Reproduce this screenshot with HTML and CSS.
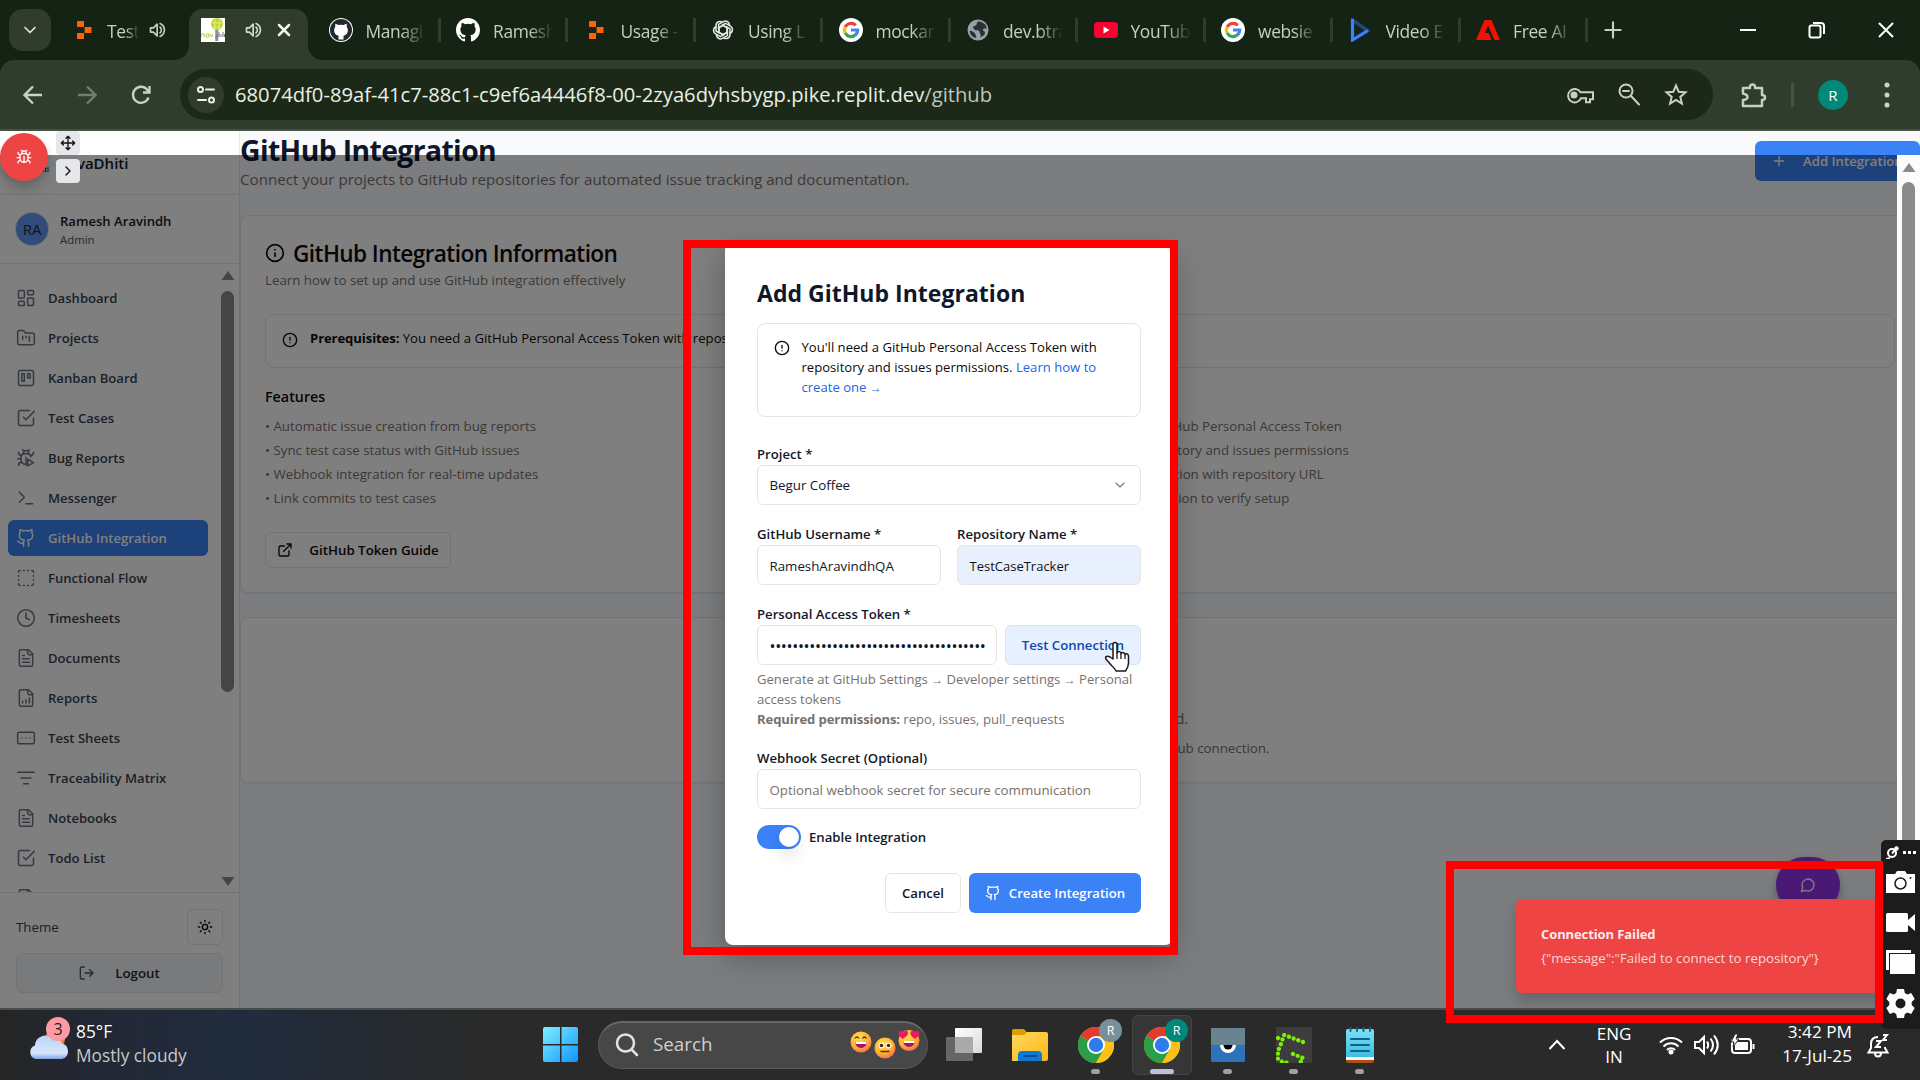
FILE: index.html
```html
<!DOCTYPE html>
<html lang="en">
<head>
<meta charset="utf-8">
<title>GitHub Integration</title>
<link rel="stylesheet" href="styles.css">
</head>
<body>
<svg class="sprite" aria-hidden="true">
  <defs>
    <linearGradient id="gWin" x1="0" y1="0" x2="1" y2="1"><stop offset="0" stop-color="#80f0ff"/><stop offset="1" stop-color="#0f95ff"/></linearGradient>
    <linearGradient id="gCloud" x1="0" y1="0" x2="0" y2="1"><stop offset="0" stop-color="#bcd4f8"/><stop offset=".75" stop-color="#d6e5fb"/><stop offset="1" stop-color="#7fa6e8"/></linearGradient>
    <linearGradient id="gFolder" x1="0" y1="0" x2="1" y2="1"><stop offset="0" stop-color="#ffd75e"/><stop offset="1" stop-color="#fbb917"/></linearGradient>
    <radialGradient id="gFace" cx=".4" cy=".3" r=".8"><stop offset="0" stop-color="#ffdf4f"/><stop offset=".6" stop-color="#ffae2b"/><stop offset="1" stop-color="#f0566b"/></radialGradient>
    <linearGradient id="gTaskA" x1="0" y1="0" x2="1" y2="1"><stop offset="0" stop-color="#fff"/><stop offset="1" stop-color="#d9d9d9"/></linearGradient>
    <linearGradient id="gNote" x1="0" y1="0" x2="0" y2="1"><stop offset="0" stop-color="#7fe0f7"/><stop offset="1" stop-color="#3fbbdf"/></linearGradient>
  </defs>
  <symbol id="i-dash" viewBox="0 0 24 24"><rect x="3" y="3" width="7" height="9" rx="1"/><rect x="14" y="3" width="7" height="5" rx="1"/><rect x="14" y="12" width="7" height="9" rx="1"/><rect x="3" y="16" width="7" height="5" rx="1"/></symbol>
  <symbol id="i-project" viewBox="0 0 24 24"><path d="M4 20h16a2 2 0 0 0 2-2V8a2 2 0 0 0-2-2h-7.9a2 2 0 0 1-1.7-.9l-.8-1.2A2 2 0 0 0 7.9 3H4a2 2 0 0 0-2 2v13c0 1.1.9 2 2 2Z"/><path d="M8 10v4M12 10v2M16 10v6"/></symbol>
  <symbol id="i-kanban" viewBox="0 0 24 24"><rect x="3" y="3" width="18" height="18" rx="2"/><rect x="7" y="7" width="3" height="9"/><rect x="14" y="7" width="3" height="5"/></symbol>
  <symbol id="i-check" viewBox="0 0 24 24"><path d="m9 11 3 3L22 4"/><path d="M21 12v7a2 2 0 0 1-2 2H5a2 2 0 0 1-2-2V5a2 2 0 0 1 2-2h11"/></symbol>
  <symbol id="i-bugplay" viewBox="0 0 24 24"><path d="M12.8 19.4a1.3 1.3 0 0 1-1.6.1C8 19 6 17 6 14v-3a4 4 0 0 1 4-4h4a4 4 0 0 1 4 3.6"/><path d="M14 13.5v8l7-4Z"/><path d="m14.1 3.9 1.9-1.9M8 2l1.9 1.9M9 7.1V6a3 3 0 1 1 6 0v1.1M6.5 9C4.6 8.8 3 7.1 3 5M6 13H2M3 21c0-2.1 1.7-3.9 3.8-4M21 5c0 2.100-1.600 3.800-3.500 4M12 20v-9"/></symbol>
  <symbol id="i-term" viewBox="0 0 24 24"><path d="m4 17 6-6-6-6M12 19h8"/></symbol>
  <symbol id="i-github" viewBox="0 0 24 24"><path d="M15 22v-4a4.800 4.800 0 0 0-1-3.500c3 0 6-2 6-5.500.080-1.250-.270-2.480-1-3.500.280-1.150.280-2.350 0-3.500 0 0-1 0-3 1.500-2.640-.5-5.360-.5-8 0C6 2 5 2 5 2c-.3 1.150-.3 2.350 0 3.500A5.400 5.400 0 0 0 4 9c0 3.500 3 5.500 6 5.500-.39.49-.68 1.050-.85 1.650-.17.6-.22 1.230-.15 1.850v4"/><path d="M9 18c-4.510 2-5-2-7-2"/></symbol>
  <symbol id="i-dashed" viewBox="0 0 24 24"><path d="M5 3a2 2 0 0 0-2 2M19 3a2 2 0 0 1 2 2M21 19a2 2 0 0 1-2 2M5 21a2 2 0 0 1-2-2M9 3h1M9 21h1M14 3h1M14 21h1M3 9v1M21 9v1M3 14v1M21 14v1"/></symbol>
  <symbol id="i-clock" viewBox="0 0 24 24"><circle cx="12" cy="12" r="10"/><path d="M12 6v6l4 2"/></symbol>
  <symbol id="i-doc" viewBox="0 0 24 24"><path d="M15 2H6a2 2 0 0 0-2 2v16a2 2 0 0 0 2 2h12a2 2 0 0 0 2-2V7Z"/><path d="M14 2v4a2 2 0 0 0 2 2h4M10 9H8M16 13H8M16 17H8"/></symbol>
  <symbol id="i-report" viewBox="0 0 24 24"><path d="M15 2H6a2 2 0 0 0-2 2v16a2 2 0 0 0 2 2h12a2 2 0 0 0 2-2V7Z"/><path d="M14 2v4a2 2 0 0 0 2 2h4M8 18v-2M12 18v-4M16 18v-6"/></symbol>
  <symbol id="i-sheet" viewBox="0 0 24 24"><rect x="2" y="5" width="20" height="14" rx="2"/><path d="M7 12h.010M12 12h.010M17 12h.010"/></symbol>
  <symbol id="i-filter" viewBox="0 0 24 24"><path d="M2 5h20M6 12h12M9 19h6"/></symbol>
  <symbol id="i-sun" viewBox="0 0 24 24"><circle cx="12" cy="12" r="4"/><path d="M12 2v2M12 20v2M4.900 4.900l1.400 1.400M17.700 17.700l1.400 1.400M2 12h2M20 12h2M6.300 17.700l-1.400 1.400M19.100 4.900l-1.400 1.400"/></symbol>
  <symbol id="i-logout" viewBox="0 0 24 24"><path d="M8 21H4a2 2 0 0 1-2-2V5a2 2 0 0 1 2-2h4M16 17l5-5-5-5M21 12H9"/></symbol>
  <symbol id="i-info" viewBox="0 0 24 24"><circle cx="12" cy="12" r="10"/><path d="M12 16v-4M12 8h.010"/></symbol>
  <symbol id="i-alert" viewBox="0 0 24 24"><circle cx="12" cy="12" r="10"/><path d="M12 8v4M12 16h.010"/></symbol>
  <symbol id="i-ext" viewBox="0 0 24 24"><path d="M15 3h6v6M10 14 21 3M18 13v6a2 2 0 0 1-2 2H5a2 2 0 0 1-2-2V8a2 2 0 0 1 2-2h6"/></symbol>
  <symbol id="i-plus" viewBox="0 0 24 24"><path d="M5 12h14M12 5v14"/></symbol>
  <symbol id="i-down" viewBox="0 0 24 24"><path d="m6 9 6 6 6-6"/></symbol>
  <symbol id="i-right" viewBox="0 0 24 24"><path d="m9 18 6-6-6-6"/></symbol>
  <symbol id="i-move" viewBox="0 0 24 24"><path d="M12 2v20M15 19l-3 3-3-3M19 9l3 3-3 3M2 12h20M5 9l-3 3 3 3M9 5l3-3 3 3"/></symbol>
  <symbol id="i-bug" viewBox="0 0 24 24"><path d="m8 2 1.900 1.900M14.100 3.900 16 2M9 7.100V6a3 3 0 1 1 6 0v1.100M12 20c-3.300 0-6-2.700-6-6v-3a4 4 0 0 1 4-4h4a4 4 0 0 1 4 4v3c0 3.300-2.700 6-6 6M12 20v-9M6.500 9C4.600 8.800 3 7.100 3 5M6 13H2M3 21c0-2.100 1.700-3.900 3.800-4M21 5c0 2.100-1.600 3.800-3.500 4M22 13h-4M17.200 17c2.100.1 3.800 1.900 3.800 4"/></symbol>
  <symbol id="i-chat" viewBox="0 0 24 24"><path d="M7.900 20A9 9 0 1 0 4 16.100L2 22Z"/></symbol>
  <symbol id="i-speaker" viewBox="0 0 24 24"><path d="M3 9.500v5h3.500L11 19V5L6.500 9.500ZM14.500 8.500a5 5 0 0 1 0 7M14.500 4.200a8.500 8.500 0 0 1 0 15.600"/></symbol>
  <symbol id="f-replit" viewBox="0 0 16 20"><path fill="#fc6503" stroke="none" d="M1 1.500Q1 1 1.500 1H7.500Q8 1 8 1.500V7H1.500Q1 7 1 6.500ZM8.600 7h6.400q.5 0 .5.500v5q0 .500-.5.500H8.600ZM1 13.500Q1 13 1.500 13H8v5.500q0 .500-.5.500h-6q-.5 0-.5-.500Z"/></symbol>
  <symbol id="f-github" viewBox="0 0 16 16"><path stroke="none" d="M8 0C3.580 0 0 3.580 0 8c0 3.540 2.290 6.530 5.470 7.590.4.070.550-.170.550-.380 0-.190-.010-.820-.010-1.490-2.010.370-2.530-.490-2.690-.940-.090-.230-.480-.940-.820-1.130-.280-.150-.680-.520-.010-.530.630-.010 1.080.580 1.230.820.720 1.210 1.870.870 2.330.660.070-.520.280-.870.510-1.070-1.780-.2-3.640-.890-3.640-3.950 0-.870.310-1.590.820-2.150-.080-.2-.360-1.020.080-2.120 0 0 .670-.210 2.200.820a7.600 7.600 0 0 1 4 0c1.530-1.040 2.200-.820 2.200-.820.440 1.100.160 1.920.080 2.120.510.560.820 1.270.820 2.150 0 3.070-1.870 3.750-3.650 3.950.290.250.540.730.540 1.480 0 1.070-.010 1.930-.010 2.200 0 .210.150.460.550.380A8 8 0 0 0 16 8c0-4.420-3.580-8-8-8Z"/></symbol>
  <symbol id="f-google" viewBox="0 0 24 24"><circle cx="12" cy="12" r="12" fill="#fff"/><g fill="none" stroke-width="3.200"><path stroke="#ea4335" d="M6.200 9a6.600 6.600 0 0 1 10.500-1.700"/><path stroke="#fbbc05" d="M6.200 15.100a6.600 6.600 0 0 1 0-6.200"/><path stroke="#34a853" d="M16.200 17.100a6.600 6.600 0 0 1-10-2"/><path stroke="#4285f4" d="M12 12h6.600a6.600 6.600 0 0 1-2.500 5.200"/></g></symbol>
  <symbol id="t-chrome" viewBox="0 0 36 36"><circle cx="18" cy="18" r="18" fill="#fbc116"/><path fill="#e33b2e" d="M18 18 2.400 9A18 18 0 0 1 33.600 9Z"/><path fill="#2a9e48" d="M18 18 2.400 9A18 18 0 0 0 18 36l8-13Z"/><path fill="#fbc116" d="M18 9h15.600A18 18 0 0 1 18 36l8-14Z"/><circle cx="18" cy="18" r="9" fill="#fff"/><circle cx="18" cy="18" r="7.200" fill="#2f7bee"/></symbol>
</svg>

<header class="browser">
  <div class="tabs">
    <button class="tab-search"><svg class="ic" width="20" height="20" stroke-width="3"><use href="#i-down"/></svg></button>
    <div class="tab tab-first"><svg width="16" height="20"><use href="#f-replit"/></svg><span class="tab-name short">Test</span><svg class="ic" width="20" height="22"><use href="#i-speaker"/></svg></div>
    <div class="tab-active">
      <svg width="24" height="24" viewBox="0 0 24 24"><rect width="24" height="24" fill="#fff"/><path d="M15 10v13M16.500 10v13" stroke="#8b8f99" stroke-width="1.500"/><circle cx="16" cy="6" r="6" fill="#c3d82e"/><path d="M11 5h10M12 9h8M14 2v9M18 2v9" stroke="#e7f19a" stroke-width=".8"/><path d="M0 19v-3h3v3M5 16h3v3H5zM9 16l1.500 3 1.500-3" fill="none" stroke="#b9d02a"/><path d="M14 19h3v-3M18 14v5M20 16v3M22 14v5M23.500 16v3" fill="none" stroke="#777b88"/></svg>
      <svg class="ic" width="20" height="22"><use href="#i-speaker"/></svg>
      <svg class="ic x" width="14" height="14" viewBox="0 0 14 14"><path d="m2 2 10 10M12 2 2 12"/></svg>
    </div>
    <div class="tab"><svg width="24" height="24" viewBox="0 0 24 24"><circle cx="12" cy="12" r="12" fill="#fff"/><circle cx="12" cy="12" r="11" fill="#24292f"/><svg x="2" y="2" width="20" height="20" viewBox="0 0 16 16" fill="#fff"><path d="M6 15.500v-3C3.500 12 2.500 10.500 2.500 8q0-1.500.900-2.500-.3-1.200.2-2.500 1 .1 2.300 1a8 8 0 0 1 4.200 0Q11.400 3.100 12.400 3q.5 1.300.2 2.500.900 1 .9 2.500c0 2.500-1 4-3.500 4.500v3Z"/></svg></svg><span class="tab-name">Managi</span></div>
    <div class="tab"><svg width="24" height="24" fill="#fff"><use href="#f-github"/></svg><span class="tab-name">Ramesh</span></div>
    <div class="tab"><svg class="narrow" width="16" height="20"><use href="#f-replit"/></svg><span class="tab-name">Usage -</span></div>
    <div class="tab"><svg width="24" height="24" viewBox="0 0 24 24" fill="none" stroke="#e4e8e2" stroke-width="1.500"><g id="petal"><path d="M12 7.200 8 9.500v5.400L5 13V7.500A4 4 0 0 1 11.800 4.600"/></g><use href="#petal" transform="rotate(60 12 12)"/><use href="#petal" transform="rotate(120 12 12)"/><use href="#petal" transform="rotate(180 12 12)"/><use href="#petal" transform="rotate(240 12 12)"/><use href="#petal" transform="rotate(300 12 12)"/></svg><span class="tab-name">Using L</span></div>
    <div class="tab"><svg width="24" height="24"><use href="#f-google"/></svg><span class="tab-name">mockar</span></div>
    <div class="tab"><svg width="24" height="24" viewBox="0 0 24 24"><circle cx="12" cy="12" r="10.500" fill="#9aa0a6"/><path fill="#2a3138" d="M12 3.500c-2 1.500-.5 3-2.500 4S6 8.500 8 11s5 .5 5.500 3 2 2.500 1 4.500 4.500-1 4.500-3.500-2.500-1.500-2-3.500 4 .5 3.500-2.500S15 3 12 3.500ZM4 12.500c2 .5 5 2 5.500 4s1.500 2 .5 3.500C6 19 3.500 16 4 12.500Z"/></svg><span class="tab-name">dev.btra</span></div>
    <div class="tab"><svg width="24" height="24" viewBox="0 0 24 24"><rect y="4" width="24" height="16" rx="4" fill="#ff0033"/><path d="m9.500 8.500 6 3.500-6 3.500Z" fill="#fff"/></svg><span class="tab-name">YouTub</span></div>
    <div class="tab"><svg width="24" height="24"><use href="#f-google"/></svg><span class="tab-name">websie</span></div>
    <div class="tab"><svg width="24" height="24" viewBox="0 0 24 24" fill="none"><path d="m3.500 2 15 10.500-15 9.500Z" stroke="#22457e" stroke-width="3.500"/><path d="M3.500 1v21l15.500-9.500" stroke="#3a82ff" stroke-width="3"/></svg><span class="tab-name">Video E</span></div>
    <div class="tab"><svg width="24" height="24" viewBox="0 0 24 24"><path fill="#f21105" d="M8.500 2h7L24 22h-5.500L12 7.500 9 15h4l2.500 7H0Z"/></svg><span class="tab-name">Free AI</span></div>
    <svg class="ic new-tab" width="26" height="26" stroke-width="3"><use href="#i-plus"/></svg>
    <div class="win-controls">
      <svg width="16" height="16" viewBox="0 0 16 16"><path d="M0 8h16"/></svg>
      <svg width="18" height="18" viewBox="0 0 18 18"><rect x="1.500" y="4.500" width="11" height="12" rx="2"/><path d="M5 2h8q3 0 3 3v8"/></svg>
      <svg width="16" height="18" viewBox="0 0 16 18"><path d="m1 2 14 14M15 2 1 16"/></svg>
    </div>
  </div>
  <div class="toolbar">
    <svg class="ic nav-ic" width="20" height="20" viewBox="0 0 20 20"><path d="M19 10H2M10 1.500 1.500 10l8.500 8.500"/></svg>
    <svg class="ic nav-ic dim" width="20" height="20" viewBox="0 0 20 20"><path d="M1 10h17M10 1.500l8.500 8.500-8.500 8.500"/></svg>
    <svg class="ic nav-ic" width="20" height="20" viewBox="0 0 20 20"><path d="M17.500 12.500a8 8 0 1 1-1.500-8L18 7M18.500 1v6.500H12"/></svg>
    <div class="omnibox">
      <span class="site-info"><svg class="ic" width="20" height="20" viewBox="0 0 20 20"><circle cx="4.500" cy="4.500" r="2.500"/><path d="M10 4.500h8M2 15h8"/><circle cx="15.500" cy="15" r="2.500"/></svg></span>
      <span class="url">68074df0-89af-41c7-88c1-c9ef6a4446f8-00-2zya6dyhsbygp.pike.replit.dev<span class="path">/github</span></span>
      <svg class="ic lt" width="28" height="20" viewBox="0 0 28 20"><path d="M14.500 7.200H27v7h-3v3h-4v-4h-5A6.700 6.700 0 1 1 14.500 7.200Z"/><circle cx="8" cy="10" r="2.500" fill="currentColor"/></svg>
      <svg class="ic lt" width="24" height="26" viewBox="0 0 24 26"><circle cx="9" cy="9" r="6.500"/><path d="M6 9h6M14 14l8 8.500"/></svg>
      <svg class="ic lt" width="24" height="24" viewBox="0 0 24 24"><path d="m12 2.500 2.700 6.300 6.800.600-5.200 4.500 1.600 6.700-5.900-3.600-5.900 3.600 1.600-6.700-5.200-4.500 6.800-.600Z"/></svg>
    </div>
    <svg class="ic puzzle" width="26" height="26" viewBox="0 0 26 26"><path d="M2 6h7q-.5-3.500 2.500-3.500T14 6h7v7q3 0 3 2.500T21 18v6H2v-6q4.500-.5 4.500-3T2 11.500Z"/></svg>
    <i class="tb-sep"></i>
    <span class="profile">R</span>
    <svg class="dots" width="6" height="26" viewBox="0 0 6 26"><circle cx="3" cy="3" r="2.500"/><circle cx="3" cy="13" r="2.500"/><circle cx="3" cy="23" r="2.500"/></svg>
  </div>
</header>

<div class="page">
  <aside class="sidebar">
    <div class="brand"><span class="brand-logo">novadhiti</span><span>NovaDhiti</span></div>
    <div class="user"><span class="avatar">RA</span><div class="who"><b>Ramesh Aravindh</b><small>Admin</small></div></div>
    <div class="nav-wrap">
      <nav>
        <a><svg class="ic" width="20" height="20"><use href="#i-dash"/></svg>Dashboard</a>
        <a><svg class="ic" width="20" height="20"><use href="#i-project"/></svg>Projects</a>
        <a><svg class="ic" width="20" height="20"><use href="#i-kanban"/></svg>Kanban Board</a>
        <a><svg class="ic" width="20" height="20"><use href="#i-check"/></svg>Test Cases</a>
        <a><svg class="ic" width="20" height="20"><use href="#i-bugplay"/></svg>Bug Reports</a>
        <a><svg class="ic" width="20" height="20"><use href="#i-term"/></svg>Messenger</a>
        <a class="current"><svg class="ic" width="20" height="20"><use href="#i-github"/></svg>GitHub Integration</a>
        <a><svg class="ic" width="20" height="20"><use href="#i-dashed"/></svg>Functional Flow</a>
        <a><svg class="ic" width="20" height="20"><use href="#i-clock"/></svg>Timesheets</a>
        <a><svg class="ic" width="20" height="20"><use href="#i-doc"/></svg>Documents</a>
        <a><svg class="ic" width="20" height="20"><use href="#i-report"/></svg>Reports</a>
        <a><svg class="ic" width="20" height="20"><use href="#i-sheet"/></svg>Test Sheets</a>
        <a><svg class="ic" width="20" height="20"><use href="#i-filter"/></svg>Traceability Matrix</a>
        <a><svg class="ic" width="20" height="20"><use href="#i-doc"/></svg>Notebooks</a>
        <a><svg class="ic" width="20" height="20"><use href="#i-check"/></svg>Todo List</a>
        <a><svg class="ic" width="20" height="20"><use href="#i-doc"/></svg></a>
      </nav>
      <div class="nav-scroll">
        <svg width="16" height="11" viewBox="0 0 16 11"><path d="M8 1 14.500 10h-13Z"/></svg>
        <i></i>
        <svg width="16" height="11" viewBox="0 0 16 11"><path d="M8 10 14.500 1h-13Z"/></svg>
      </div>
    </div>
    <div class="side-foot">
      <div class="theme"><span>Theme</span><button><svg class="ic" width="16" height="16"><use href="#i-sun"/></svg></button></div>
      <button class="logout"><svg class="ic" width="16" height="16"><use href="#i-logout"/></svg>Logout</button>
    </div>
  </aside>

  <main>
    <div class="head">
      <div><h1>GitHub Integration</h1><p>Connect your projects to GitHub repositories for automated issue tracking and documentation.</p></div>
      <button class="add"><svg class="ic" width="16" height="16"><use href="#i-plus"/></svg>Add Integration</button>
    </div>
    <section class="card info">
      <h2><svg class="ic" width="20" height="20"><use href="#i-info"/></svg>GitHub Integration Information</h2>
      <p class="desc">Learn how to set up and use GitHub integration effectively</p>
      <div class="prereq"><svg class="ic" width="16" height="16"><use href="#i-alert"/></svg><span><b>Prerequisites:</b> You need a GitHub Personal Access Token with repository access</span></div>
      <div class="cols">
        <div><h3>Features</h3><ul><li>• Automatic issue creation from bug reports</li><li>• Sync test case status with GitHub issues</li><li>• Webhook integration for real-time updates</li><li>• Link commits to test cases</li></ul></div>
        <div><h3>Setup</h3><ul class="steps"><li>• Create a GitHub Personal Access Token</li><li>• Grant repository and issues permissions</li><li class="wide">• Add integration with repository URL</li><li>• Test connection to verify setup</li></ul></div>
      </div>
      <button class="guide"><svg class="ic" width="16" height="16"><use href="#i-ext"/></svg>GitHub Token Guide</button>
    </section>
    <section class="card empty">
      <p class="lead">No GitHub integrations configured.</p>
      <p>Create an integration to get started with your GitHub connection.</p>
    </section>
  </main>
  <button class="chat"><svg class="ic" width="16" height="16"><use href="#i-chat"/></svg></button>
  <div class="overlay"></div>
  <div class="page-scroll"><svg width="16" height="11" viewBox="0 0 16 11"><path d="M8 1 14.500 10h-13Z"/></svg><i></i></div>

  <button class="bug-fab"><svg class="ic" width="16" height="16"><use href="#i-bug"/></svg></button>
  <div class="fab-tools"><button><svg class="ic" width="16" height="16"><use href="#i-move"/></svg></button><button><svg class="ic" width="16" height="16"><use href="#i-right"/></svg></button></div>

  <div class="dialog">
    <h2>Add GitHub Integration</h2>
    <div class="note"><svg class="ic" width="16" height="16"><use href="#i-alert"/></svg><p>You'll need a GitHub Personal Access Token with<br>repository and issues permissions. <a>Learn how to<br>create one <span class="arrow">→</span></a></p></div>
    <div class="field"><label>Project *</label><div class="input select">Begur Coffee<svg class="ic" width="16" height="16"><use href="#i-down"/></svg></div></div>
    <div class="pair">
      <div class="field"><label>GitHub Username *</label><div class="input low">RameshAravindhQA</div></div>
      <div class="field"><label>Repository Name *</label><div class="input low filled">TestCaseTracker</div></div>
    </div>
    <div class="field token">
      <label>Personal Access Token *</label>
      <div class="row"><div class="input low secret"><span>••••••••••••••••••••••••••••••••••••••</span></div><button class="test">Test Connection</button></div>
      <p class="help">Generate at GitHub Settings <span class="arrow">→</span> Developer settings <span class="arrow">→</span> Personal<br>access tokens<br><b>Required permissions:</b> repo, issues, pull_requests</p>
    </div>
    <div class="field"><label>Webhook Secret (Optional)</label><div class="input low hint">Optional webhook secret for secure communication</div></div>
    <div class="switch-row"><span class="switch"><i></i></span><label>Enable Integration</label></div>
    <div class="actions"><button class="cancel">Cancel</button><button class="create"><svg class="ic" width="16" height="16"><use href="#i-github"/></svg>Create Integration</button></div>
  </div>

  <div class="toast"><b>Connection Failed</b><span>{"message":"Failed to connect to repository"}</span></div>
</div>

<footer class="taskbar">
  <div class="weather">
    <svg width="46" height="48" viewBox="0 0 46 48"><circle cx="27" cy="24" r="10" fill="#f78420"/><path fill="url(#gCloud)" d="M8 44a7 7 0 0 1-1-13.500 10 10 0 0 1 17-7 8 8 0 0 1 10 5 8 8 0 0 1 0 15.500Z"/><circle cx="30" cy="14" r="12" fill="#ff99a4"/></svg>
    <span class="badge">3</span>
    <div><span>85°F</span><span class="cond">Mostly cloudy</span></div>
  </div>
  <div class="apps">
    <svg class="start" width="36" height="36" viewBox="0 0 36 36" fill="url(#gWin)"><path d="M2 0h15v17H0V2Q0 0 2 0ZM18.500 0H33q2 0 2 2v15H18.500ZM0 18.500h17V35H2q-2 0-2-2ZM18.500 18.500H35V33q0 2-2 2H18.500Z"/></svg>
    <div class="search"><svg width="24" height="24" viewBox="0 0 24 24" fill="#666" stroke="#e4e4e4" stroke-width="2.500" stroke-linecap="round"><circle cx="10.500" cy="10" r="8.500"/><path d="m17 17 5 5"/></svg><span>Search</span>
      <svg class="faces" width="70" height="30" viewBox="0 0 70 30"><g fill="url(#gFace)"><circle cx="11" cy="12" r="10.500"/><circle cx="35" cy="18" r="10.500"/><circle cx="59" cy="10.500" r="10.500"/></g><g fill="#a3126b"><path d="M5 12h12a6 6 0 0 1-12 0ZM53 11h12a6 6 0 0 1-12 0Z"/></g><g fill="none" stroke="#5c2d12" stroke-width="1.300"><path d="M5 8.500q2-3 4 0M12.500 8.500q2-3 4 0M30.500 21.500h9"/></g><path d="M5.500 12h11v2h-11ZM53.500 11h11v2h-11Z" fill="#fff"/><g fill="#fff"><circle cx="31.500" cy="15.500" r="3"/><circle cx="38.500" cy="15.500" r="3"/></g><g fill="#4a2a1a"><circle cx="31.500" cy="15.500" r="1.800"/><circle cx="38.500" cy="15.500" r="1.800"/></g><path fill="#f0165f" d="M53 9c-3-2-5-4-4.500-6.500S52 0 53.500 2.500C55 0 58 0 58 2.800S55.500 7 53 9ZM65 9c-2.500-2-5-4-4.500-6.500S64 0 65 2.500C66.500 0 69.500 0 69.500 2.800S67.500 7 65 9Z"/></svg>
    </div>
    <svg class="taskview" width="36" height="36" viewBox="0 0 36 36"><rect y="10" width="27" height="24" rx="1" fill="#666"/><rect x="9" y="1" width="27" height="25" rx="1" fill="url(#gTaskA)"/><path d="M9 10h18v16H9Z" fill="#aaa"/></svg>
    <div class="app"><svg width="36" height="36" viewBox="0 0 36 36"><path fill="#df9c00" d="M0 4Q0 2 2 2h9q2 0 3.500 3L16 7v6H0Z"/><path fill="url(#gFolder)" d="M0 8h12l3-3h19q2 0 2 2v25q0 2-2 2H0Z"/><path fill="#0f7ad0" d="M6 34V28q0-4 4-4h16q4 0 4 4v6Z"/><path d="M11 29h14" stroke="#0a4f96" stroke-width="2"/></svg></div>
    <div class="app run"><svg width="36" height="36"><use href="#t-chrome"/></svg><span class="pip">R</span></div>
    <div class="app run focus"><svg width="36" height="36"><use href="#t-chrome"/></svg><span class="pip teal">R</span></div>
    <div class="app run"><svg width="36" height="36" viewBox="0 0 36 36"><rect x="1" y="1" width="34" height="34" rx="1" fill="#2d73bb"/><path fill="#698490" d="M1 2q0-1 1-1h32q1 0 1 1v16H1Z"/><path fill="#fff" d="M10 18h16a8 8 0 0 1-16 0Z"/><path fill="#000" d="M13.500 18h9a4.500 4.500 0 0 1-9 0Z"/></svg></div>
    <div class="app run"><svg width="36" height="36" viewBox="0 0 36 36"><rect width="36" height="36" fill="#3d3d3d"/><path d="M27 15 8 8 5 17 2 24v8l6 4 6-1M2 11l4 3M17 27l10 4-3 5" fill="none" stroke="#7cf000" stroke-width="4.200" stroke-linecap="round" stroke-dasharray=".1 4.900"/></svg></div>
    <div class="app run"><svg width="36" height="36" viewBox="0 0 36 36"><path fill="#a8500f" d="M4 28h28v6q0 2-2 2H6q-2 0-2-2Z"/><path fill="#f5f5f5" d="M4 26h28v7H4Z"/><path fill="url(#gNote)" d="M4 4q0-2 2-2h24q2 0 2 2v26H4Z"/><path d="M9 12h18M9 18h18M9 24h18M8.500 1v3M15 1v3M21.500 1v3M28 1v3" stroke="#07668c" stroke-width="2" stroke-linecap="round"/></svg></div>
  </div>
  <div class="tray">
    <svg class="up" width="18" height="12" viewBox="0 0 18 12"><path d="m1.500 10 7.500-8 7.500 8"/></svg>
    <div class="lang"><span>ENG</span><span>IN</span></div>
    <svg class="wifi" width="24" height="20" viewBox="0 0 24 20"><path d="M1 7.500a15.500 15.500 0 0 1 22 0M4.500 11.500a10.500 10.500 0 0 1 15 0M8 15a5.500 5.500 0 0 1 8 0"/><circle cx="12" cy="17" r="1.500" fill="#fff"/></svg>
    <svg width="25" height="22" viewBox="0 0 25 22"><path d="M1 8v6h4l5 5V3L5 8ZM13 7.500q2.500 3.500 0 7M16.500 4.500q5 6.500 0 13M20 1.500q7.500 9.500 0 19"/></svg>
    <svg width="26" height="22" viewBox="0 0 26 22"><rect x="2" y="5" width="19" height="14" rx="3"/><rect x="5" y="8" width="13" height="8" fill="#fff" stroke="none"/><path d="M23.500 10v5"/><path d="M5 0 1 8h3l-1 5 6-8H6l2-5Z" fill="#fff" stroke="#2a2a2a" stroke-width="1"/></svg>
    <div class="time"><span>3:42 PM</span><span>17-Jul-25</span></div>
    <svg width="24" height="26" viewBox="0 0 24 26"><path d="M12 5q-7 0-7 7v4l-2.500 4.500h19L19 16v-1M9 21q0 3.500 3 3.500t3-3.500M10 9h5l-5 6h5M17 3h4l-4 5h4"/></svg>
  </div>
</footer>

<div class="capture">
  <div class="cap-top"><svg width="13" height="13" viewBox="0 0 13 13"><circle cx="6" cy="7" r="4" fill="none" stroke="#fff" stroke-width="2"/><path d="M0 13l4-1M6 7.500 10 3" fill="none" stroke="#fff" stroke-width="2"/><circle cx="10.500" cy="2.500" r="2.200" fill="#fff"/></svg><i></i><i></i><i></i></div>
  <svg class="cap-photo" width="29" height="22" viewBox="0 0 29 22"><path fill="#fff" d="M0 3h9l2-3h8l2 3h8v19H0Z"/><circle cx="14.500" cy="12.500" r="5.500" fill="none" stroke="#1c1c1c" stroke-width="1.500"/><circle cx="24.500" cy="7" r="1" fill="#1c1c1c"/></svg>
  <svg class="cap-video" width="29" height="20" viewBox="0 0 29 20"><path fill="#fff" d="M1.500 0H20.500Q22 0 22 1.500V7L29 1v17l-7-6v5.500Q22 19 20.500 19H1.500Q0 19 0 17.500v-16Q0 0 1.500 0Z"/></svg>
  <svg class="cap-window" width="29" height="24" viewBox="0 0 29 24"><path fill="#fff" d="M0 0h25v3H3v17H0ZM4 4h25v20H4Z"/></svg>
  <svg class="cap-gear" width="29" height="29" viewBox="0 0 29 29"><path fill="#fff" fill-rule="evenodd" d="M11 0h7l.8 4 2.500 1.400L25.200 4l3.500 6-3 2.900v3.200l3 2.900-3.500 6-3.900-1.400-2.500 1.400-.8 4h-7l-.8-4-2.500-1.400L3.800 25l-3.500-6 3-2.900v-3.200l-3-2.900 3.500-6 3.900 1.400L10.200 4ZM14.500 9.500a5 5 0 1 0 0 10 5 5 0 0 0 0-10Z"/></svg>
</div>

<div class="mark mark-dialog"></div>
<div class="mark mark-toast"></div>
<svg class="cursor" width="27" height="32" viewBox="0 0 27 32"><path fill="#fff" stroke="#1a1a1a" stroke-width="1.500" stroke-linejoin="round" d="M9 18V3.500q0-2 2-2t2 2V12q.5-1.500 2-1.500t2 2q.5-1 2-1t2 2.200q.5-.9 1.800-.9T24.500 15v7q0 4-3 8H12q-1.500-3-4.500-5.500L2 18q-1-2 .5-2.500T6 16Z"/><path d="M13 12v6M17 13v5M21 14v4" stroke="#1a1a1a" stroke-width="1.300"/></svg>
</body>
</html>
```
FILE: styles.css
```css
* { box-sizing: border-box; }
body { margin: 0; width: 1920px; height: 1080px; overflow: hidden; position: relative; font-family: "Open Sans", "Noto Sans", sans-serif; font-size: 13.3px; color: #0f172a; background: #2a2a2a; }
button { font: inherit; color: inherit; border: 0; padding: 0; margin: 0; background: none; display: flex; align-items: center; justify-content: center; }
h1, h2, h3, p, ul { margin: 0; padding: 0; list-style: none; }
svg { flex: none; display: block; }
.sprite { position: absolute; width: 0; height: 0; }
.ic { fill: none; stroke: currentColor; stroke-width: 2; stroke-linecap: round; stroke-linejoin: round; }

/* browser chrome */
.browser { height: 131px; background: #152314; color: #c1d3bb; }
.tabs { height: 60px; display: flex; align-items: center; }
.tab-search { width: 42px; height: 42px; margin-left: 9px; border-radius: 14px; background: #303d2d; color: #e3eddf; }
.tab { width: 127.500px; height: 24px; display: flex; align-items: center; padding-left: 15.500px; border-right: 3px solid #303d2d; gap: 13px; font-size: 17.400px; flex: none; }
.tab .narrow { margin: 0 4px; }
.tab-name { width: 64px; line-height: 26px; margin-top: 2px; overflow: hidden; white-space: nowrap; letter-spacing: -.35px; -webkit-mask-image: linear-gradient(90deg, #000 55%, transparent 94%); mask-image: linear-gradient(90deg, #000 55%, transparent 94%); }
.tab-name.short { width: 34px; margin-right: -8px; }
.tab-first { width: 138px; padding-left: 25px; border: 0; gap: 15px; }
.tab-active { width: 119px; height: 51px; align-self: flex-end; background: #303d2d; border-radius: 14px 14px 0 0; display: flex; align-items: center; padding: 0 0 9px 12px; position: relative; margin-right: 5px; color: #cfdccb; }
.tab-active::before, .tab-active::after { content: ""; position: absolute; bottom: 0; width: 14px; height: 14px; }
.tab-active::before { left: -14px; background: radial-gradient(circle at 0 0, transparent 13.500px, #303d2d 14px); }
.tab-active::after { right: -14px; background: radial-gradient(circle at 100% 0, transparent 13.500px, #303d2d 14px); }
.tab-active .ic { margin-left: 19px; }
.tab-active .x { margin-left: 13px; stroke-width: 2.500; color: #eef5ea; }
.new-tab { margin-left: 12px; }
.win-controls { margin-left: auto; margin-right: 26px; display: flex; align-items: center; gap: 52px; }
.win-controls svg { fill: none; stroke: #fff; stroke-width: 2; }
.toolbar { height: 71px; background: #303d2d; border-radius: 14px 14px 0 0; border-bottom: 2px solid #465243; display: flex; align-items: center; padding: 0 0 0 23px; }
.nav-ic { margin-right: 34px; stroke-linecap: butt; stroke-linejoin: miter; stroke-width: 2.300; color: #c3d9bb; }
.nav-ic + .nav-ic + .nav-ic { margin-right: 29px; }
.dim { color: #70806b; }
.omnibox { width: 1533px; height: 51px; border-radius: 26px; background: #1c2919; display: flex; align-items: center; padding: 0 25px 0 8px; color: #e9f0e6; }
.site-info { width: 36px; height: 36px; border-radius: 50%; background: #303d2d; display: grid; place-items: center; }
.url { font-size: 20.200px; margin: -2px auto 0 11px; white-space: nowrap; line-height: 28px; }
.path { color: #bfc8bb; }
.lt { margin-left: 23px; color: #c9cfc6; stroke-linejoin: miter; }
.puzzle { margin-left: 28px; stroke-width: 2.500; }
.tb-sep { width: 3px; height: 24px; background: #46553f; margin-left: 24px; }
.profile { width: 30px; height: 30px; border-radius: 50%; background: #00897b; color: #fff; display: grid; place-items: center; font-size: 15px; margin-left: 24px; }
.dots { margin-left: 36px; fill: #c3d9bb; }

/* page */
.page { position: relative; height: 879px; display: flex; background: #f8fafc; overflow: hidden; border-bottom: 2px solid #474b4a; }
.overlay { position: absolute; left: 0; right: 0; top: 24px; bottom: 0; background: rgba(0, 0, 0, .5); }
.sidebar { width: 240px; border-right: 1px solid #e5e7eb; background: #fff; display: flex; flex-direction: column; }
.brand { height: 64px; border-bottom: 1px solid #e5e7eb; padding: 0 0 0 16px; display: flex; align-items: center; gap: 7px; font-weight: 600; font-size: 15px; color: #111827; }
.brand-logo { width: 33px; font-size: 7px; padding-top: 14px; overflow: hidden; text-align: right; direction: rtl; }
.user { height: 69px; border-bottom: 1px solid #e5e7eb; display: flex; align-items: center; padding-left: 15px; gap: 11px; }
.avatar { width: 34px; height: 34px; border-radius: 50%; background: #6298f4; border: 1.500px solid #d6dff0; display: grid; place-items: center; font-size: 15px; color: #1e293b; }
.who { display: flex; flex-direction: column; line-height: 19px; }
.who b { font-weight: 600; font-size: 13.100px; color: #111827; margin-top: 2px; }
.who small { font-size: 11.400px; color: #4b5563; line-height: 18px; }
.nav-wrap { height: 628px; display: flex; overflow: hidden; }
nav { width: 220px; padding: 16px 12px 0 8px; display: flex; flex-direction: column; gap: 4px; }
nav a { height: 36px; flex: none; padding-left: 8px; display: flex; align-items: center; gap: 12px; border-radius: 6px; color: #374151; font-weight: 600; font-size: 13.100px; }
nav .ic { color: #6b7280; stroke-width: 1.800; }
nav .current, nav .current .ic { color: #fff; }
nav .current { background: #3b82f6; }
.nav-scroll { width: 15px; display: flex; flex-direction: column; align-items: center; fill: #8b8b8b; padding-top: 6px; }
.nav-scroll i { width: 13px; height: 401px; margin: 10px 0 184px; border-radius: 7px; background: #8b8b8b; }
.side-foot { flex: 1; border-top: 1px solid #e5e7eb; padding: 16px 16px 0; }
.theme { display: flex; justify-content: space-between; align-items: center; height: 36px; color: #374151; }
.theme button { width: 36px; height: 36px; border: 1px solid #e7e5e4; border-radius: 6px; color: #0c0a09; }
.logout { width: 207px; height: 40px; margin-top: 8px; border: 1px solid #e5e7eb; border-radius: 6px; background: #f3f4f8; color: #1f2937; font-weight: 600; gap: 20px; }
.logout .ic { color: #4b5563; }
main { flex: 1; min-width: 0; }
.head { height: 84px; display: flex; justify-content: space-between; }
h1 { font-size: 28.300px; line-height: 38px; font-weight: 700; letter-spacing: -.600px; }
.head p { margin-top: -2px; font-size: 15.150px; line-height: 24px; color: #78716c; white-space: nowrap; }
.add { width: 165px; height: 40px; margin-top: 10px; border-radius: 6px; background: #3b82f6; color: #fff; font-weight: 600; font-size: 13.200px; gap: 16px; justify-content: flex-start; padding-left: 16px; white-space: nowrap; flex: none; }
.card { width: 1680px; background: #fff; border: 1px solid #e5e7eb; border-radius: 8px; box-shadow: 0 1px 2px rgba(0, 0, 0, .06); }
.info { height: 378px; padding: 21px 24px 0; color: #0c0a09; }
.info h2 { display: flex; align-items: center; gap: 8px; font-size: 22.600px; line-height: 34px; font-weight: 600; letter-spacing: -.580px; }
.info h2 .ic { margin-top: -3px; }
.desc { line-height: 20px; margin-top: -1px; color: #78716c; }
.prereq { height: 54px; width: 1630px; margin-top: 24px; border: 1px solid #e7e5e4; border-radius: 8px; display: flex; gap: 12px; padding: 13px 16px 0; line-height: 20px; font-size: 13.150px; }
.prereq .ic { margin-top: 4px; }
.prereq b { font-weight: 700; letter-spacing: -.12px; }
.cols { display: grid; grid-template-columns: 826.500px 1fr; margin-top: 17px; }
h3 { font-size: 14.300px; line-height: 24px; font-weight: 600; }
li { line-height: 24px; color: #78716c; white-space: nowrap; }
.steps li { font-size: 13.250px; }
.steps .wide { padding-left: 3px; }
h3 + ul { margin-top: 5px; }
.guide { width: 186px; height: 36px; margin-top: 22px; border: 1px solid #e7e5e4; border-radius: 6px; gap: 16px; font-weight: 600; color: #0c0a09; }
.empty { margin-top: 24px; height: 166px; text-align: center; padding: 88px 24px 0 0; color: #6b7280; line-height: 24px; }
.empty .lead { font-size: 15px; padding-right: 4px; }
.empty p + p { margin-top: 6px; }
.chat { position: absolute; left: 1776px; top: 726px; width: 64px; height: 56px; border-radius: 28px; background: #9333ea; color: #fff; box-shadow: 0 4px 10px rgba(0, 0, 0, .3); }
.page-scroll { position: absolute; right: 0; top: 24px; width: 23px; bottom: 0; background: #fcfcfc; display: flex; flex-direction: column; align-items: center; padding: 7px 0 0; fill: #8b8b8b; }
.page-scroll i { width: 13px; height: 800px; margin-top: 9px; border-radius: 7px; background: #8b8b8b; }
.bug-fab { position: absolute; left: 0; top: 2px; width: 48px; height: 48px; border-radius: 50%; background: #ef4444; color: #fff; box-shadow: 0 10px 15px rgba(0, 0, 0, .12), 0 4px 6px rgba(0, 0, 0, .12); }
.fab-tools { position: absolute; left: 56px; top: 0; display: flex; flex-direction: column; gap: 4px; }
.fab-tools button { width: 24px; height: 24px; border-radius: 4px; background: #e5e7eb; color: #111; }

/* dialog */
.dialog { position: absolute; left: 725px; top: 111px; width: 448px; height: 703px; padding: 32px; background: #fff; border-radius: 8px; box-shadow: 0 12px 32px rgba(0, 0, 0, .28); display: flex; flex-direction: column; }
.dialog h2 { font-size: 23px; font-weight: 700; line-height: 32px; letter-spacing: .02px; margin-top: 3px; }
.note { margin-top: 14px; height: 94px; border: 1px solid #e7e5e4; border-radius: 8px; padding: 13px 15px; display: flex; gap: 12px; color: #0c0a09; line-height: 20px; white-space: nowrap; flex: none; font-size: 13.100px; }
.note .ic { margin: 3px 0 0 1px; }
.note p { margin-left: -.5px; }
.note a { color: #2563eb; }
.arrow { font-family: "Liberation Sans", sans-serif; font-size: 12px; line-height: 10px; }
.field label, .switch-row label { display: block; font-weight: 600; font-size: 13.150px; line-height: 22px; white-space: nowrap; }
.note + .field { margin-top: 26px; }
.input { height: 40px; border: 1px solid #e7e5e4; border-radius: 6px; padding: 0 11.500px; display: flex; align-items: center; }
.low { padding-top: 2px; }
.select { justify-content: space-between; padding-right: 12px; }
.select .ic { color: #777; stroke-width: 1.600; }
.pair { display: grid; grid-template-columns: 1fr 1fr; gap: 16px; margin: 18px 0; }
.filled { background: #e8f0fe; color: #111; font-size: 13px; }
.row { display: flex; gap: 8px; }
.secret { width: 240px; }
.secret span { font-size: 16px; letter-spacing: -.33px; white-space: nowrap; }
.test { width: 136px; height: 40px; border: 1px solid #dbe3ee; border-radius: 6px; background: #e6f0ff; color: #0f47af; font-weight: 600; font-size: 13.150px; }
.help { margin-top: 4px; line-height: 20px; font-size: 13.100px; color: #78716c; white-space: nowrap; }
.help b { letter-spacing: -.12px; }
.token { margin-bottom: 18px; }
.hint { color: #78716c; }
.switch-row { margin-top: 16px; height: 24px; display: flex; align-items: center; gap: 8px; }
.switch { width: 44px; height: 24px; border-radius: 12px; background: #3b82f6; padding: 2px; display: flex; justify-content: flex-end; }
.switch i { width: 20px; height: 20px; border-radius: 50%; background: #fff; box-shadow: 0 10px 15px rgba(0, 0, 0, .1); }
.actions { margin-top: 24px; display: flex; justify-content: flex-end; gap: 8px; font-weight: 600; font-size: 13.150px; }
.cancel { width: 76px; height: 40px; border: 1px solid #e7e5e4; border-radius: 6px; }
.create { width: 172px; height: 40px; border-radius: 6px; background: #3b82f6; color: #fff; gap: 8px; }
.toast { position: absolute; left: 1516px; top: 768px; width: 388px; height: 94px; border-radius: 6px; background: #ef4444; color: #fdeaea; padding: 25px 25px 0; display: flex; flex-direction: column; gap: 4px; line-height: 20px; box-shadow: 0 8px 16px rgba(0, 0, 0, .2); }
.toast span { color: #fbd5d5; }
.toast b { font-weight: 700; font-size: 13px; letter-spacing: -.1px; }

/* taskbar */
.taskbar { height: 70px; display: flex; color: #fff; background: linear-gradient(90deg, #252525 0, #232733 80px, #202c3e 240px, #232a35 330px, #2a2a2a 480px); }
.taskbar svg { fill: none; }
.weather { width: 543px; display: flex; position: relative; padding: 5px 0 0 28px; }
.badge { position: absolute; left: 46px; top: 7px; width: 24px; line-height: 24px; text-align: center; color: #222; font-size: 16px; }
.weather div { display: flex; flex-direction: column; margin-left: 2px; margin-top: 5px; font-size: 17.300px; line-height: 24px; }
.cond { color: #c8c8c8; }
.apps { display: flex; width: 857px; height: 70px; align-items: center; }
.apps .start { fill: url(#gWin); margin-right: 19px; }
.search { width: 330px; height: 48px; border-radius: 24px; background: #474747; border: 1px solid #595959; border-top: 2px solid #6a6666; display: flex; align-items: center; padding: 0 7px 2px 16px; font-size: 18.800px; color: #cfcfcf; }
.search span { margin: -1px auto 0 14px; }
.taskview { margin: 0 15px 0 18px; }
.app { width: 60px; height: 60px; margin-right: 6px; border-radius: 6px; display: grid; place-items: center; position: relative; flex: none; }
.taskview + .app { margin-left: 3px; }
.focus { background: #363636; border: 1px solid #444; }
.run::after { content: ""; position: absolute; bottom: 1px; left: 25px; width: 9px; height: 5px; border-radius: 3px; background: #a0a0a0; }
.focus::after { left: 17px; bottom: 0; width: 24px; background: #c2bde0; }
.pip { position: absolute; left: 33px; top: 4px; width: 23px; height: 23px; border-radius: 50%; background: #78909c; font-size: 12.500px; display: grid; place-items: center; }
.teal { background: #00897b; left: 32px; top: 3px; }
.tray { flex: 1; display: flex; align-items: center; font-size: 17px; line-height: 23px; padding-left: 148px; white-space: nowrap; }
.tray svg { stroke: #fff; stroke-width: 2; margin-right: 11px; }
.tray .up { margin-right: 23px; }
.lang, .time { display: flex; flex-direction: column; align-items: center; width: 50px; margin-right: 20px; }
.time { align-items: flex-end; width: 90px; margin: -3px 14px 0 -5px; font-size: 17.200px; line-height: 24px; }

/* screen capture toolbar and annotations */
.capture { position: absolute; left: 1881px; top: 840px; width: 39px; height: 189px; border-radius: 5px 0 0 5px; background: #1c1c1c; display: flex; flex-direction: column; align-items: center; padding-top: 6px; }
.cap-top { display: flex; align-items: center; gap: 2px; }
.cap-top svg { margin-right: 2px; }
.cap-top i { width: 3px; height: 3px; background: #fff; }
.cap-photo { margin-top: 12px; }
.cap-video { margin-top: 20px; }
.cap-window { margin-top: 17px; }
.cap-gear { margin-top: 15px; }
.mark { position: absolute; border: 8px solid #f00; }
.mark-dialog { left: 683px; top: 240px; width: 495px; height: 715px; }
.mark-toast { left: 1446px; top: 861px; width: 437px; height: 162px; }
.cursor { position: absolute; left: 1104px; top: 641px; }
```
